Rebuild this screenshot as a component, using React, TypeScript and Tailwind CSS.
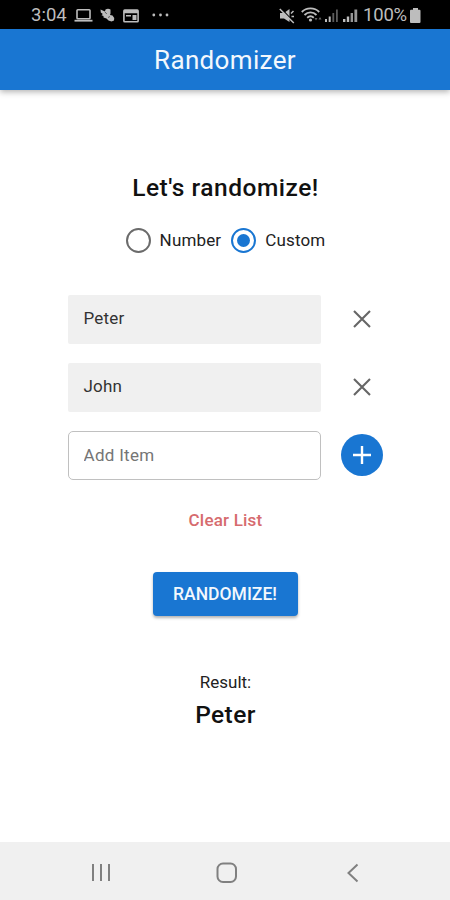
import { useState } from 'react'

function StatusBar() {
  return (
    <div className="h-[29px] shrink-0 bg-black flex items-center text-[#bdbdbd] fill-current">
      <span className="ml-[31px] w-[36px] mt-[2px] text-[18.500px] leading-none whitespace-nowrap">3:04</span>
      {/* laptop */}
      <svg className="ml-[7px] mt-[2px]" width="19" height="15" viewBox="0 0 19 15">
        <rect x="3" y="1.8" width="13" height="9" rx="0.8" fill="none" stroke="currentColor" strokeWidth="1.6" />
        <path d="M0.5 11.8h18v1.8h-18z" />
      </svg>
      <svg className="ml-[7px] mt-[1px]" width="15" height="15" viewBox="0 0 15 15">
        <path d="M0.5 1.5l4.500 2L5.500 1.500Q8 0 10.500 1.500L10.500 5.500 10 7l2.500 .5Q14.500 9 14 12.500L11.500 13.500 8.500 12.500 6.500 10.500 3.500 9.500 3.500 8 1.500 7.200 2.800 6 0.800 4.500z" />
        <path d="M5 4l1.800 2M8 9.500l2-1" stroke="#333" strokeWidth="0.7" />
      </svg>
      <svg className="ml-[8px] mt-[2px]" width="16" height="14" viewBox="0 0 16 14">
        <rect x="0.900" y="1.100" width="14.200" height="11.600" rx="0.800" fill="none" stroke="currentColor" strokeWidth="1.600" />
        <path d="M1 2h14v2.200H1zM3 6h5v1.500H3zM9.500 6h4v5h-4z" />
      </svg>
      <svg className="ml-[13px] mt-[1px]" width="17" height="4" viewBox="0 0 17 4">
        <circle cx="1.800" cy="2" r="1.400" />
        <circle cx="8.500" cy="2" r="1.400" />
        <circle cx="15" cy="2" r="1.400" />
      </svg>
      <div className="ml-auto mr-[29px] flex items-center">
        {/* muted speaker */}
        <svg className="mt-[2px]" width="16" height="16" viewBox="0 0 16 16">
          <path d="M1 5h4L10.500 1v13L5 10.500H1z" />
          <path d="M2.200 0.500l13 14" stroke="#000" strokeWidth="1.200" />
          <path d="M0.800 1l14 14M12 5.500l2.500-2.500M12.500 8.500h2.500" fill="none" stroke="currentColor" strokeWidth="1.500" />
        </svg>
        <svg className="ml-[6px] mt-[1px]" width="22" height="16" viewBox="0 0 22 16">
          <path d="M0.800 5C5.500 0.200 13.500 0.200 18.200 5M3.500 8C7 4.500 12 4.500 15.500 8M6.200 10.800C8.200 9 10.800 9 12.800 10.800" fill="none" stroke="currentColor" strokeWidth="1.900" />
          <circle cx="9.500" cy="13" r="1.600" />
          <path d="M13.500 11h3L15 13.500zM17.500 12.500h3L19 10z" fill="#666" />
        </svg>
        <svg className="ml-[2px] mt-[2px]" width="14" height="15" viewBox="0 0 14 15">
          <path d="M0 11h2v3H0zM3.700 8.500h2V14h-2z" />
          <path d="M7.400 5h1.800v9H7.400zM11 1.500h1.800V14H11z" fill="#5c5c5c" />
        </svg>
        <svg className="ml-[4px] mt-[2px]" width="15" height="15" viewBox="0 0 15 15">
          <path d="M0 11h2.400v3H0zM3.800 8.500h2.400V14H3.800z" />
          <path d="M7.600 5H10v9H7.600zM11.400 1.500h2.800V14h-2.800z" fill="#969696" />
        </svg>
        <span className="ml-[5px] w-[44px] mt-[2px] text-[18.500px] leading-none tracking-[-0.200px] whitespace-nowrap">100%</span>
        <svg className="ml-[3px] mt-[2px]" width="11" height="15" viewBox="0 0 11 15">
          <path d="M3 0h5v1.800h1.500q1 0 1 1V14q0 1-1 1h-8.500q-1 0-1-1V2.800q0-1 1-1h2z" />
        </svg>
      </div>
    </div>
  )
}

function Radio({ label, checked, onChange }: { label: string; checked: boolean; onChange: () => void }) {
  return (
    <button onClick={onChange} className="flex items-center gap-[9px]">
      <span className={`size-[25px] rounded-full border-2 flex items-center justify-center ${checked ? 'border-[#1976d2]' : 'border-[#6b6b6b]'}`}>
        {checked && <span className="size-[13px] rounded-full bg-[#1976d2]" />}
      </span>
      <span className="-mt-[1px] text-[17px] leading-[24px] tracking-[0.150px] text-[#222]">{label}</span>
    </button>
  )
}

export default function App() {
  const [mode, setMode] = useState('custom')
  const [items, setItems] = useState(['Peter', 'John'])
  const [draft, setDraft] = useState('')
  const [result, setResult] = useState('Peter')

  const addItem = () => {
    if (!draft.trim()) return
    setItems([...items, draft.trim()])
    setDraft('')
  }

  return (
    <div className="w-[450px] h-[900px] flex flex-col overflow-hidden bg-white font-['Roboto',sans-serif] text-[#111]">
      <StatusBar />
      <header className="h-[61px] shrink-0 bg-[#1976d2] flex items-center justify-center shadow-[0_2px_6px_rgba(0,0,0,0.3)]">
        <h1 className="text-[26px] leading-none tracking-[0.350px] text-[#f3f8fd]">Randomizer</h1>
      </header>

      <main className="flex-1 flex flex-col items-center">
        <h2 className="mt-[82px] ml-[1px] text-[24.500px] leading-[32px] font-medium tracking-[0.520px]">Let's randomize!</h2>
        <div className="mt-[24px] ml-[1px] flex items-center gap-[10px]">
          <Radio label="Number" checked={mode === 'number'} onChange={() => setMode('number')} />
          <Radio label="Custom" checked={mode === 'custom'} onChange={() => setMode('custom')} />
        </div>

        <div className="mt-[42px] w-[315px] flex flex-col gap-[19px]">
          {items.map((item, i) => (
            <div key={i} className="flex items-center justify-between">
              <div className="w-[253px] h-[49px] bg-[#f0f0f0] rounded-[2px] px-[16px] pb-[1px] flex items-center text-[17px] tracking-[0.200px] text-[#333]">
                {item}
              </div>
              <button onClick={() => setItems(items.filter((_, n) => n !== i))} className="w-[42px] pb-[1px] flex justify-center">
                <svg width="18" height="18" viewBox="0 0 18 18" stroke="#666" strokeWidth="2.100">
                  <path d="M1 1l16 16M17 1L1 17" />
                </svg>
              </button>
            </div>
          ))}
          <div className="h-[49px] flex items-center justify-between">
            <input
              value={draft}
              onChange={(e) => setDraft(e.target.value)}
              placeholder="Add Item"
              className="w-[253px] h-[49px] rounded-[5px] border border-[#c0c0c0] px-[15px] pb-[2px] text-[17px] tracking-[0.300px] placeholder:text-[#757575] outline-none"
            />
            <button onClick={addItem} className="size-[42px] -mt-[1px] rounded-full bg-[#1976d2] flex items-center justify-center">
              <svg width="18" height="18" viewBox="0 0 18 18" stroke="#fff" strokeWidth="2.400">
                <path d="M9 0v18M0 9h18" />
              </svg>
            </button>
          </div>
        </div>

        <button onClick={() => setItems([])} className="mt-[28px] ml-[1px] text-[17px] leading-[24px] font-medium tracking-[0.200px] text-[#d66b6e]">
          Clear List
        </button>
        <button
          onClick={() => setResult(items[Math.floor(Math.random() * items.length)] ?? '')}
          className="mt-[40px] w-[145px] h-[44px] rounded-[4px] bg-[#1976d2] text-[17.500px] font-medium text-[#f3f8fd] shadow-[0_2px_3px_rgba(0,0,0,0.3)]"
        >
          RANDOMIZE!
        </button>

        <p className="mt-[54px] ml-[1px] text-[17px] leading-[24px] text-[#222]">Result:</p>
        <p className="mt-[5px] ml-[1px] text-[24.500px] leading-[32px] font-medium tracking-[0.400px]">{result}</p>
      </main>

      <nav className="h-[58px] shrink-0 bg-[#f0f0f0]">
        <svg width="450" height="58" viewBox="0 0 450 58" fill="none" stroke="#808080" strokeWidth="2">
          <path d="M93 22v17M101 22v17M109 22v17" />
          <rect x="217.500" y="21.500" width="18.500" height="18.500" rx="5.500" />
          <path d="M357.500 22.500l-9 8.500 9 8.500" />
        </svg>
      </nav>
    </div>
  )
}
